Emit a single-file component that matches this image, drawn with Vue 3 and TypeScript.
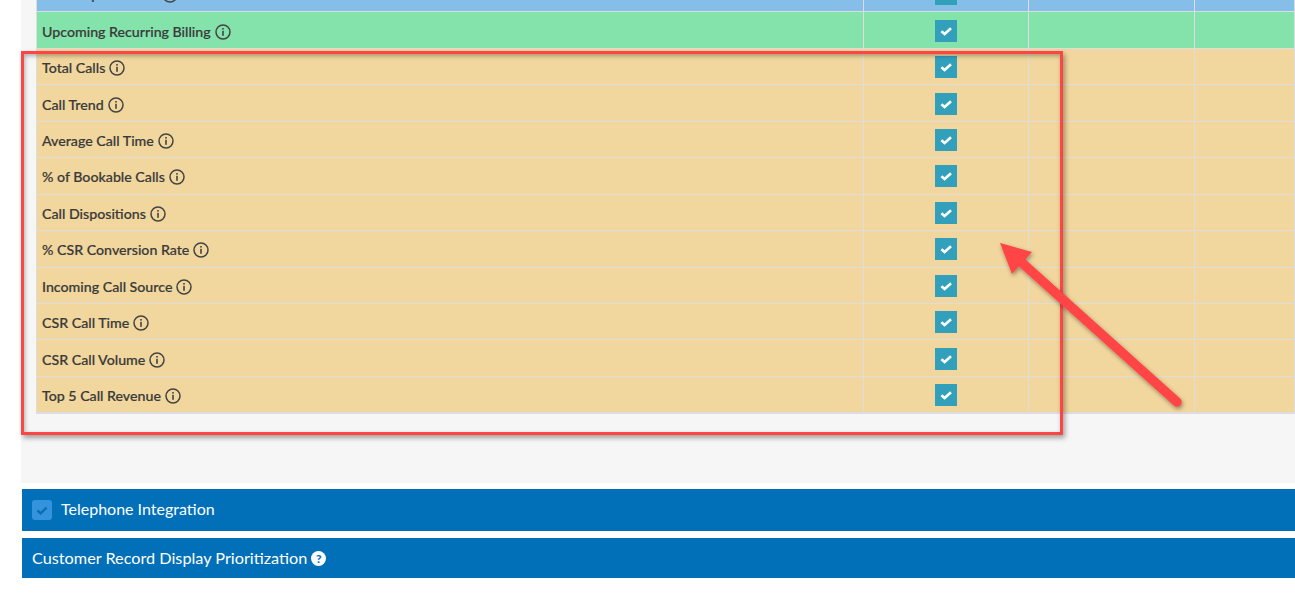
<script setup lang="ts">
interface Row { label: string; tone: string }
const labels = [
  'Total Calls', 'Call Trend', 'Average Call Time', '% of Bookable Calls', 'Call Dispositions',
  '% CSR Conversion Rate', 'Incoming Call Source', 'CSR Call Time', 'CSR Call Volume', 'Top 5 Call Revenue',
]
const rows: Row[] = [
  { label: 'Total Expenditures', tone: 'blue' },
  { label: 'Upcoming Recurring Billing', tone: 'green' },
  ...labels.map((label) => ({ label, tone: 'tan' })),
]
</script>

<template>
  <div class="page">
    <section class="panel">
      <div class="table">
        <div v-for="row in rows" :key="row.label" class="row" :class="row.tone">
          <div class="cell name">
            <span class="label">{{ row.label }}</span>
            <svg class="info" viewBox="0 0 16 16" aria-hidden="true">
              <circle cx="8" cy="8" r="7" fill="none" stroke="#444" stroke-width="1.5" />
              <rect x="7.2" y="6.8" width="1.6" height="5" fill="#444" />
              <rect x="7.2" y="4" width="1.6" height="1.6" fill="#444" />
            </svg>
          </div>
          <div class="cell center">
            <span class="check">
              <svg viewBox="0 0 22 22" aria-hidden="true">
                <path d="M6.4 11.2 9.6 14 16 8.2" fill="none" stroke="#fff" stroke-width="2.6" />
              </svg>
            </span>
          </div>
          <div class="cell"></div>
          <div class="cell"></div>
        </div>
      </div>
    </section>
    <div class="bar first">
      <span class="toggle">
        <svg viewBox="0 0 20 20" aria-hidden="true">
          <path d="M5.4 10.4 8.6 13.4 14.6 7.6" fill="none" stroke="#0f6cb0" stroke-width="2.4" />
        </svg>
      </span>
      <span class="bar-text up">Telephone Integration</span>
    </div>
    <div class="bar second">
      <span class="bar-text wide">Customer Record Display Prioritization</span>
      <span class="help">?</span>
    </div>
    <div class="callout"></div>
    <svg class="arrow" viewBox="0 0 1295 600" aria-hidden="true">
      <defs>
        <filter id="arrowShadow" x="-20%" y="-20%" width="140%" height="140%">
          <feDropShadow dx="1" dy="2" stdDeviation="2" flood-color="#000" flood-opacity="0.4" />
        </filter>
      </defs>
      <g filter="url(#arrowShadow)">
        <line x1="1177" y1="402" x2="1020" y2="261" stroke="#ff4444" stroke-width="9.5" stroke-linecap="round" />
        <polygon points="1000,243 1032,252 1012,274" fill="#ff4444" />
      </g>
    </svg>
  </div>
</template>

<style>
html, body { margin: 0; background: #fff; }
</style>

<style scoped>
.page {
  position: relative;
  height: 600px;
  overflow: hidden;
  font-family: Lato, "Liberation Sans", sans-serif;
  color: #333;
}
.panel {
  margin-left: 21px;
  height: 483px;
  padding-left: 15px;
  background: #f6f6f6;
  box-sizing: border-box;
  overflow: hidden;
}
.table {
  margin-top: -25px;
  padding-top: 1.04px;
  border-left: 1px solid #ddd;
  border-bottom: 1px solid #ddd;
}
.row {
  display: grid;
  grid-template-columns: 827px 165px 166px 1fr;
  height: 36.45px;
  box-sizing: border-box;
  border-bottom: 1px solid #ddd;
}
.blue { background: #85bfe9; }
.green { background: #84e3ab; }
.tan { background: #f1d69d; }
.cell {
  display: flex;
  align-items: center;
  border-right: 1px solid #ddd;
  min-width: 0;
}
.name {
  gap: 4px;
  padding-left: 5px;
  font-size: 14.2px;
  font-weight: 500;
  color: #3a3a3a;
  -webkit-text-stroke: 0.2px #3a3a3a;
  white-space: nowrap;
}
.label { position: relative; top: 1px; }
.center { justify-content: center; }
.info { width: 16px; height: 16px; flex: none; margin-top: 3px; }
.check {
  width: 22px;
  height: 22px;
  margin-top: 1px;
  background: #329fbb;
  display: block;
}
.check svg { display: block; width: 22px; height: 22px; }
.bar {
  margin-left: 22px;
  background: #0170b9;
  color: #fff;
  display: flex;
  align-items: center;
  font-size: 16px;
}
.bar-text { position: relative; top: -1px; }
.up { top: -2px; }
.wide { font-size: 16.24px; }
.first {
  margin-top: 6px;
  height: 42px;
  padding-left: 10px;
  gap: 9px;
}
.second {
  margin-top: 7px;
  height: 40px;
  padding-left: 10px;
  gap: 4px;
}
.toggle {
  width: 20px;
  height: 20px;
  border-radius: 3px;
  background: #3393dd;
}
.toggle svg { display: block; width: 20px; height: 20px; }
.help {
  width: 15px;
  height: 15px;
  border-radius: 50%;
  background: #fff;
  color: #0170b9;
  font-size: 12px;
  font-weight: 900;
  line-height: 15px;
  text-align: center;
}
.callout {
  position: absolute;
  left: 21px;
  top: 51px;
  width: 1042px;
  height: 384px;
  box-sizing: border-box;
  border: 3px solid #ff4444;
  box-shadow: 2px 3px 5px rgba(0, 0, 0, 0.35), inset 1px 2px 4px rgba(0, 0, 0, 0.3);
}
.arrow {
  position: absolute;
  left: 0;
  top: 0;
  width: 1295px;
  height: 600px;
}
</style>
